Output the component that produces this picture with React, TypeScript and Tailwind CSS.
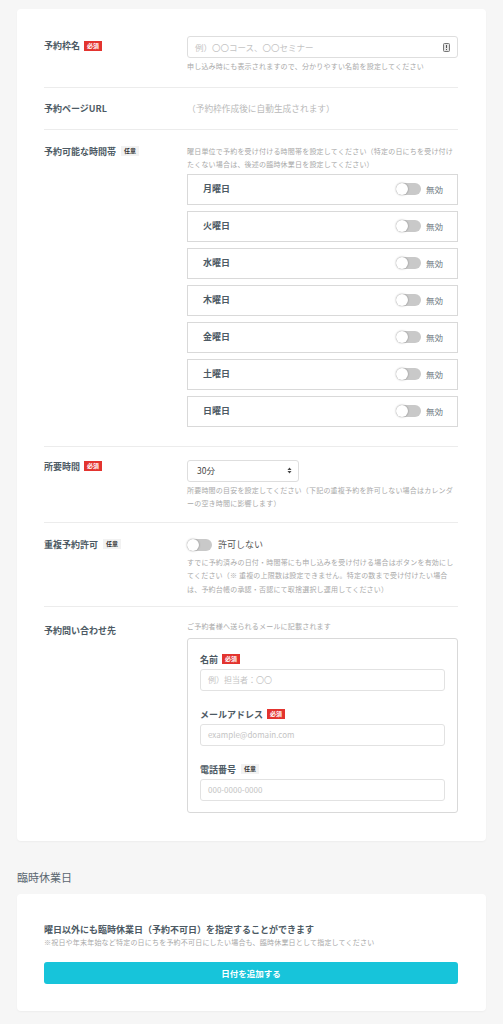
import React from 'react';

const Required = () => (
  <span className="ml-[4px] inline-flex h-[10px] items-center bg-[#e3342f] px-[3px] text-[6px] font-bold leading-none text-white">
    必須
  </span>
);

const Optional = () => (
  <span className="ml-[5px] inline-flex h-[10px] items-center bg-[#f2f2f2] px-[3px] text-[6px] font-bold leading-none text-[#333]">
    任意
  </span>
);

const Toggle = () => (
  <span className="relative inline-block h-[12px] w-[25px] shrink-0 rounded-full bg-[#c9c9c9]">
    <span className="absolute left-0 top-0 h-[12px] w-[12px] rounded-full bg-white shadow-[0_0_2px_rgba(0,0,0,0.4)]" />
  </span>
);

const Hint = ({ children, className = '' }: { children: React.ReactNode; className?: string }) => (
  <p className={`text-[7px] leading-[13.5px] tracking-[0.2px] text-[#a9a9a9] ${className}`}>{children}</p>
);

const Label = ({ children, className = '' }: { children: React.ReactNode; className?: string }) => (
  <div className={`flex w-[143px] shrink-0 items-center text-[9px] font-bold leading-[13px] text-[#4d5a64] ${className}`}>
    {children}
  </div>
);

const days = ['月曜日', '火曜日', '水曜日', '木曜日', '金曜日', '土曜日', '日曜日'];

export default function App() {
  return (
    <div className="min-h-screen bg-[#f6f6f6] px-[17px] pb-[14px] pt-[9px] font-['Noto_Sans_CJK_JP',sans-serif]">
      {/* Main card */}
      <div className="rounded-[4px] bg-white pb-[28px] pl-[27px] pr-[28px] pt-[27px] shadow-[0_1px_2px_rgba(0,0,0,0.04)]">
        {/* 予約枠名 */}
        <div className="flex border-b border-[#ececec] pb-[13px]">
          <Label className="self-start pt-[3px]">
            予約枠名
            <Required />
          </Label>
          <div className="flex-1">
            <div className="flex h-[22px] items-center justify-between rounded-[3px] border border-[#dedede] pl-[7px] pr-[7px]">
              <span className="text-[8.5px] text-[#c4c4c4]">例）〇〇コース、〇〇セミナー</span>
              <svg width="7" height="9" viewBox="0 0 7 9">
                <rect x="0.5" y="0.5" width="6" height="8" rx="1" fill="#e4e4e4" stroke="#777" />
                <rect x="3" y="2" width="1" height="3" fill="#555" />
                <rect x="3" y="6" width="1" height="1" fill="#555" />
              </svg>
            </div>
            <Hint className="mt-[2px]">申し込み時にも表示されますので、分かりやすい名前を設定してください</Hint>
          </div>
        </div>

        {/* 予約ページURL */}
        <div className="flex border-b border-[#ececec] py-[14px]">
          <Label>予約ページURL</Label>
          <div className="flex-1 text-[8.7px] leading-[13px] text-[#b9b9b9]">（予約枠作成後に自動生成されます）</div>
        </div>

        {/* 予約可能な時間帯 */}
        <div className="flex border-b border-[#ececec] pb-[19px] pt-[15px]">
          <Label className="self-start">
            予約可能な時間帯
            <Optional />
          </Label>
          <div className="flex-1">
            <Hint>
              曜日単位で予約を受け付ける時間帯を設定してください（特定の日にちを受け付けたくない場合は、後述の臨時休業日を設定してください）
            </Hint>
            <div className="mt-[2px] flex flex-col gap-[6px]">
              {days.map((d) => (
                <div
                  key={d}
                  className="flex h-[31px] items-center justify-between border border-[#d9d9d9] pl-[15px] pr-[14px]"
                >
                  <span className="text-[9px] font-bold text-[#4d5a64]">{d}</span>
                  <div className="flex items-center gap-[5px]">
                    <Toggle />
                    <span className="text-[8.5px] text-[#6c7880]">無効</span>
                  </div>
                </div>
              ))}
            </div>
          </div>
        </div>

        {/* 所要時間 */}
        <div className="flex border-b border-[#ececec] pb-[11px] pt-[13px]">
          <Label className="self-start">
            所要時間
            <Required />
          </Label>
          <div className="flex-1">
            <div className="flex h-[22px] w-[112px] items-center justify-between rounded-[3px] border border-[#dedede] pl-[9px] pr-[6px]">
              <span className="text-[8.5px] text-[#444]">30分</span>
              <svg width="5" height="7" viewBox="0 0 5 7">
                <path d="M0.5 3 L2.5 0.5 L4.5 3 Z" fill="#444" />
                <path d="M0.5 4 L2.5 6.5 L4.5 4 Z" fill="#444" />
              </svg>
            </div>
            <Hint className="mt-[2px]">
              所要時間の目安を設定してください（下記の重複予約を許可しない場合はカレンダーの空き時間に影響します）
            </Hint>
          </div>
        </div>

        {/* 重複予約許可 */}
        <div className="flex border-b border-[#ececec] pb-[10px] pt-[15px]">
          <Label className="self-start">
            重複予約許可
            <Optional />
          </Label>
          <div className="flex-1">
            <div className="flex h-[14px] items-center gap-[6px]">
              <Toggle />
              <span className="text-[9px] text-[#555]">許可しない</span>
            </div>
            <Hint className="mt-[4px]">
              すでに予約済みの日付・時間帯にも申し込みを受け付ける場合はボタンを有効にしてください（※ 重複の上限数は設定できません。特定の数まで受け付けたい場合は、予約台帳の承認・否認にて取捨選択し運用してください）
            </Hint>
          </div>
        </div>

        {/* 予約問い合わせ先 */}
        <div className="flex pt-[13px]">
          <Label className="self-start pt-[3.5px]">予約問い合わせ先</Label>
          <div className="flex-1">
            <Hint>ご予約者様へ送られるメールに記載されます</Hint>
            <div className="mt-[4.5px] rounded-[3px] border border-[#d9d9d9] px-[12px] pb-[11px] pt-[13.5px]">
              <div className="flex items-center text-[9px] font-bold leading-[13px] text-[#4d5a64]">
                名前
                <Required />
              </div>
              <div className="mt-[3.5px] flex h-[22px] items-center rounded-[3px] border border-[#e2e2e2] px-[7px] text-[8px] text-[#c4c4c4]">
                例）担当者：〇〇
              </div>
              <div className="mt-[16.5px] flex items-center text-[9px] font-bold leading-[13px] text-[#4d5a64]">
                メールアドレス
                <Required />
              </div>
              <div className="mt-[3.5px] flex h-[22px] items-center rounded-[3px] border border-[#e2e2e2] px-[7px] text-[8px] text-[#c4c4c4]">
                example@domain.com
              </div>
              <div className="mt-[16.5px] flex items-center text-[9px] font-bold leading-[13px] text-[#4d5a64]">
                電話番号
                <Optional />
              </div>
              <div className="mt-[3.5px] flex h-[22px] items-center rounded-[3px] border border-[#e2e2e2] px-[7px] text-[8px] text-[#c4c4c4]">
                000-0000-0000
              </div>
            </div>
          </div>
        </div>
      </div>

      {/* 臨時休業日 */}
      <h2 className="mb-[9px] mt-[28px] text-[11px] leading-[16px] text-[#5b6770]">臨時休業日</h2>
      <div className="rounded-[4px] bg-white pb-[27px] pl-[27px] pr-[28px] pt-[28.5px] shadow-[0_1px_2px_rgba(0,0,0,0.04)]">
        <p className="text-[9px] font-bold leading-[13px] text-[#4d5a64]">
          曜日以外にも臨時休業日（予約不可日）を指定することができます
        </p>
        <Hint>※祝日や年末年始など特定の日にちを予約不可日にしたい場合も、臨時休業日として指定してください</Hint>
        <button className="mt-[13px] flex h-[22px] w-full items-center justify-center rounded-[3px] bg-[#17c4da] text-[8.5px] font-bold text-white">
          日付を追加する
        </button>
      </div>
    </div>
  );
}
